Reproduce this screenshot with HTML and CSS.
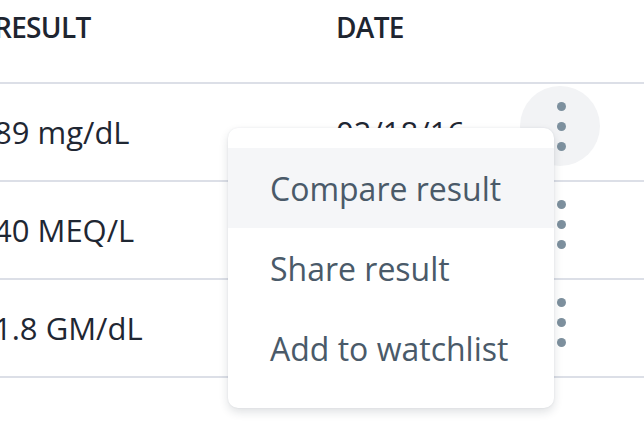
FILE: index.html
```html
<!DOCTYPE html>
<html>
<head>
<meta charset="utf-8">
<link rel="stylesheet" href="styles.css">
</head>
<body>
<div class="page">
  <div class="table">
    <div class="row head">
      <div class="cell result">RESULT</div>
      <div class="cell date">DATE</div>
      <div class="cell action"></div>
    </div>
    <div class="row">
      <div class="cell result">89 mg/dL</div>
      <div class="cell date">02/18/16</div>
      <div class="cell action"><button class="kebab active"><span></span><span></span><span></span></button></div>
    </div>
    <div class="row">
      <div class="cell result">40 MEQ/L</div>
      <div class="cell date">02/18/16</div>
      <div class="cell action"><button class="kebab"><span></span><span></span><span></span></button></div>
    </div>
    <div class="row">
      <div class="cell result">1.8 GM/dL</div>
      <div class="cell date">02/18/16</div>
      <div class="cell action"><button class="kebab"><span></span><span></span><span></span></button></div>
    </div>
  </div>
  <ul class="menu">
    <li class="item hover">Compare result</li>
    <li class="item">Share result</li>
    <li class="item">Add to watchlist</li>
  </ul>
</div>
</body>
</html>
```
FILE: styles.css
```css
* { box-sizing: border-box; }
html, body { margin: 0; padding: 0; background: #fff; }
body {
  font-family: "Open Sans", "Noto Sans", sans-serif;
  font-size: 31px;
  color: #1f2733;
  overflow: hidden;
}
.page {
  position: relative;
  width: 644px;
  height: 428px;
}
.table {
  margin-left: -26px;
  width: 670px;
}
.row {
  display: grid;
  grid-template-columns: 362px 184px 80px;
  align-items: center;
  height: 98px;
  border-bottom: 2px solid #dcdfe7;
}
.row.head {
  height: 84px;
  align-items: start;
  padding-top: 8px;
}
.head .cell {
  font-size: 28px;
  font-weight: 600;
  color: #1e2530;
  letter-spacing: -0.7px;
}
.cell.result { padding-left: 20px; }
.action {
  display: flex;
  justify-content: center;
  align-self: stretch;
}
.kebab {
  width: 80px;
  height: 80px;
  margin-top: 2px;
  border: 0;
  border-radius: 50%;
  background: transparent;
  display: flex;
  flex-direction: column;
  align-items: center;
  justify-content: center;
  gap: 11px;
  padding: 0 0 0 2px;
}
.kebab.active { background: #f2f3f5; }
.kebab span {
  width: 9px;
  height: 9px;
  border-radius: 50%;
  background: #7d909e;
}
.menu {
  position: absolute;
  left: 228px;
  top: 128px;
  width: 326px;
  margin: 0;
  padding: 20px 0;
  list-style: none;
  background: #fff;
  border-radius: 10px;
  box-shadow: 0 4px 10px rgba(30, 40, 60, 0.14), 0 0 2px rgba(30, 40, 60, 0.08);
}
.item {
  height: 80px;
  display: flex;
  align-items: center;
  padding-left: 42px;
  font-size: 32px;
  color: #4a5a69;
}
.item.hover { background: #f5f6f8; }
```
